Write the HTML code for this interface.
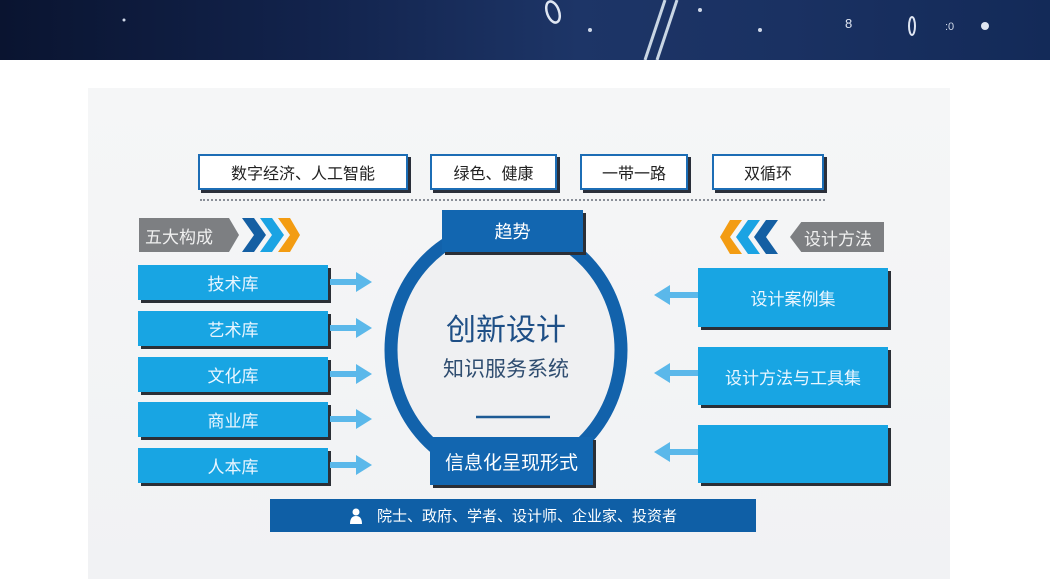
<!DOCTYPE html>
<html><head><meta charset="utf-8"><style>
*{margin:0;padding:0;box-sizing:border-box}
body{width:1050px;height:579px;overflow:hidden;background:#fff;position:relative;font-family:"Liberation Sans","Noto Sans CJK SC",sans-serif}
.a{position:absolute}
.hdr{left:0;top:0;width:1050px;height:60px;background:linear-gradient(90deg,#0a1430 0%,#12234c 30%,#1d3567 55%,#1a3162 75%,#132a58 100%)}
.panel{left:88px;top:88px;width:862px;height:491px;background:linear-gradient(180deg,#f5f6f7,#f1f2f4)}
.tb{background:#fff;border:2px solid #1c6db5;box-shadow:3px 3px 0 #2a2f3a;height:36px;top:154px;font-size:16px;color:#222;display:flex;align-items:center;justify-content:center}
.lb{left:138px;width:190px;height:35px;background:#18a5e3;box-shadow:3px 3px 0 #2b2f36;color:#eaf6ff;font-size:17px;display:flex;align-items:center;justify-content:center}
.rb{left:698px;width:190px;background:#18a5e3;box-shadow:3px 3px 0 #2b2f36;color:#eaf6ff;font-size:17px;display:flex;align-items:center;justify-content:center}
.db{background:#1266b0;box-shadow:3px 3px 0 #2b2f36;color:#fff;display:flex;align-items:center;justify-content:center}
.tag{background:#7d7f82;color:#f0f0f0;font-size:17px;display:flex;align-items:center}
</style></head><body>
<div class="a hdr"></div>
<svg class="a" style="left:0;top:0" width="1050" height="60">
<ellipse cx="553" cy="12" rx="6" ry="11" fill="none" stroke="#dfe6f2" stroke-width="2.5" transform="rotate(-20 553 12)"/>
<line x1="645" y1="60" x2="665" y2="0" stroke="#c9d6e4" stroke-width="3"/><line x1="657" y1="60" x2="677" y2="0" stroke="#c9d6e4" stroke-width="3"/>
<text x="845" y="28" fill="#dfe6f2" font-size="13">8</text><ellipse cx="912" cy="26" rx="3" ry="9" fill="none" stroke="#dfe6f2" stroke-width="2"/>
<text x="945" y="30" fill="#cfd8e8" font-size="11">:0</text><circle cx="985" cy="26" r="4" fill="#dfe6f2"/>
<circle cx="590" cy="30" r="2" fill="#cfd8e8"/><circle cx="700" cy="10" r="2" fill="#cfd8e8"/><circle cx="760" cy="30" r="2" fill="#cfd8e8"/><circle cx="124" cy="20" r="1.5" fill="#cfd8e8"/>
</svg>
<div class="a panel"></div>
<div class="a tb" style="left:198px;width:210px">数字经济、人工智能</div>
<div class="a tb" style="left:430px;width:127px">绿色、健康</div>
<div class="a tb" style="left:580px;width:108px">一带一路</div>
<div class="a tb" style="left:712px;width:112px">双循环</div>
<div class="a" style="left:200px;top:199px;width:625px;border-top:2px dotted #8a8f98"></div>
<div class="a tag" style="left:139px;top:218px;width:100px;height:34px;padding-left:6px;clip-path:polygon(0 0,90% 0,100% 50%,90% 100%,0 100%)">五大构成</div>
<svg class="a" style="left:240px;top:218px" width="62" height="34">
<polygon points="2,0 14,0 26,17 14,34 2,34 14,17" fill="#145fa3"/>
<polygon points="20,0 32,0 44,17 32,34 20,34 32,17" fill="#1aa3e3"/>
<polygon points="38,0 50,0 60,17 50,34 38,34 50,17" fill="#f39c12"/>
</svg>
<div class="a tag" style="left:790px;top:222px;width:94px;height:30px;padding-left:14px;clip-path:polygon(0 50%,12% 0,100% 0,100% 100%,12% 100%)">设计方法</div>
<svg class="a" style="left:718px;top:220px" width="62" height="34">
<polygon points="60,0 48,0 36,17 48,34 60,34 48,17" fill="#145fa3"/>
<polygon points="42,0 30,0 18,17 30,34 42,34 30,17" fill="#1aa3e3"/>
<polygon points="24,0 12,0 2,17 12,34 24,34 12,17" fill="#f39c12"/>
</svg>
<div class="a lb" style="top:265px">技术库</div>
<div class="a lb" style="top:311px">艺术库</div>
<div class="a lb" style="top:357px">文化库</div>
<div class="a lb" style="top:402px">商业库</div>
<div class="a lb" style="top:448px">人本库</div>
<svg class="a" style="left:0;top:0" width="1050" height="579">
<g fill="#5bb8ea">
<path d="M330 279h26v-7l16 10-16 10v-7h-26z"/>
<path d="M330 325h26v-7l16 10-16 10v-7h-26z"/>
<path d="M330 371h26v-7l16 10-16 10v-7h-26z"/>
<path d="M330 416h26v-7l16 10-16 10v-7h-26z"/>
<path d="M330 462h26v-7l16 10-16 10v-7h-26z"/>
<path d="M698 292h-28v-7l-16 10 16 10v-7h28z"/>
<path d="M698 370h-28v-7l-16 10 16 10v-7h28z"/>
<path d="M698 449h-28v-7l-16 10 16 10v-7h28z"/>
</g>
<ellipse cx="506" cy="350" rx="115" ry="124" fill="#eff0f2" stroke="#1262ab" stroke-width="13"/>
<line x1="476" y1="417" x2="550" y2="417" stroke="#1d5a94" stroke-width="2.5"/>
</svg>
<div class="a" style="left:400px;top:305px;width:212px;text-align:center;font-size:30px;color:#1e4f86">创新设计</div>
<div class="a" style="left:400px;top:353px;width:212px;text-align:center;font-size:21px;color:#2f4d70">知识服务系统</div>
<div class="a db" style="left:442px;top:210px;width:141px;height:42px;font-size:18px">趋势</div>
<div class="a db" style="left:430px;top:437px;width:163px;height:48px;font-size:19px">信息化呈现形式</div>
<div class="a rb" style="top:268px;height:59px">设计案例集</div>
<div class="a rb" style="top:347px;height:58px">设计方法与工具集</div>
<div class="a rb" style="top:425px;height:58px"></div>
<div class="a db" style="left:270px;top:499px;width:486px;height:33px;font-size:15px;box-shadow:none;background:#0f5fa6">
<svg width="14" height="16" style="margin-right:14px"><circle cx="7" cy="4" r="3.5" fill="#fff"/><path d="M1 16 Q1 8 7 8 Q13 8 13 16z" fill="#fff"/></svg>院士、政府、学者、设计师、企业家、投资者</div>
</body></html>
